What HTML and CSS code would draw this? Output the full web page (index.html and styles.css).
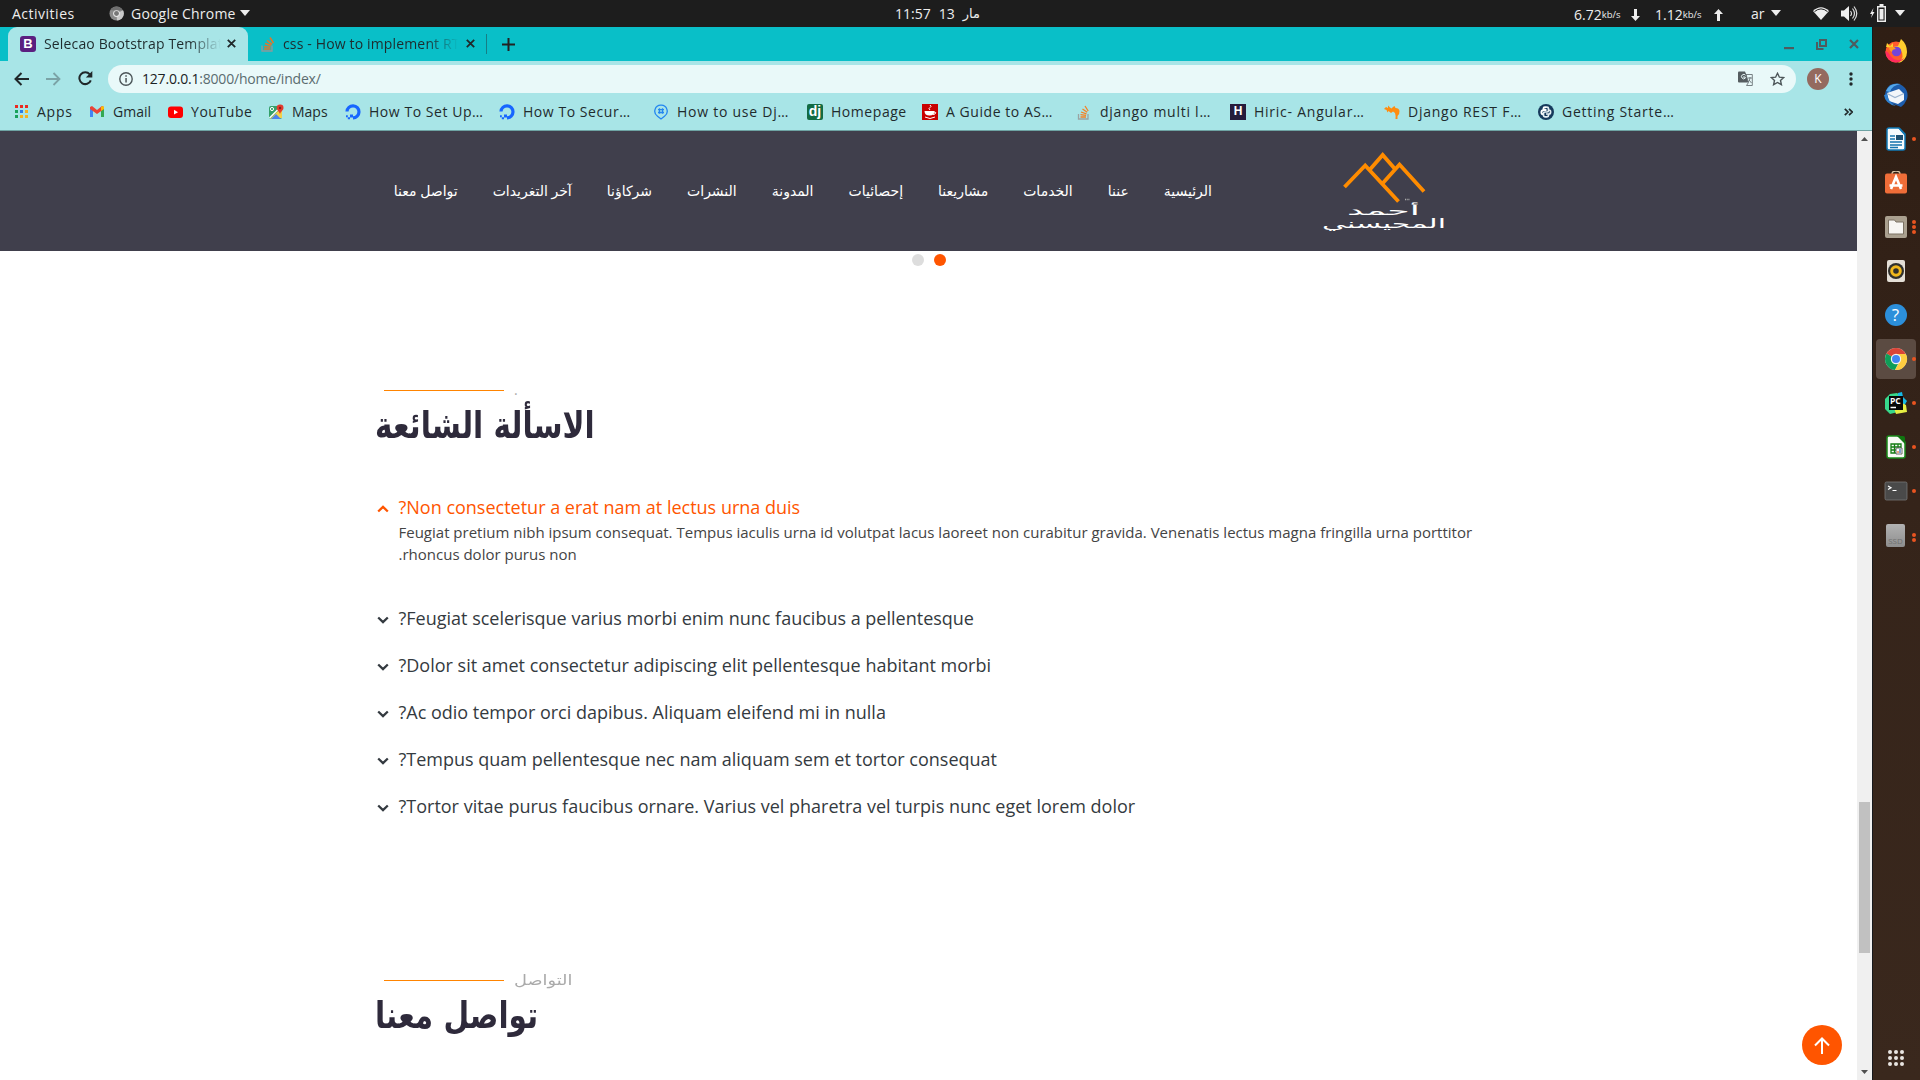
FILE: index.html
```
<!DOCTYPE html>
<html lang="ar">
<head>
<meta charset="utf-8">
<title>Selecao Bootstrap Template</title>
<link rel="stylesheet" href="styles.css">
</head>
<body>
<div class="desktop">
  <header class="topbar">
    <div class="top-left">
      <span class="activities">Activities</span>
      <svg class="app-icon" width="15" height="15" viewBox="0 0 16 16"><circle cx="8" cy="8" r="7.5" fill="#8b8b8b"/><path d="M8 8 15 4.5A7.500 7.500 0 0 1 8.500 15.500Z" fill="#c9c9c9"/><path d="M1.500 4.300A7.500 7.500 0 0 1 14.500 4.300L8 5Z" fill="#6f6f6f"/><circle cx="8" cy="8" r="3.600" fill="#e8e8e8"/><circle cx="8" cy="8" r="2.600" fill="#777"/></svg>
      <span class="app-name">Google Chrome</span>
      <i class="caret"></i>
    </div>
    <div class="clock"><span>11:57</span><span>13</span><span class="month">مار</span></div>
    <div class="top-right">
      <span class="rate r1">6.72<small>kb/s</small></span>
      <svg class="net n1" width="9" height="12" viewBox="0 0 9 12"><path d="M3 0h3v7h3l-4.500 5L0 7h3z" fill="#eee"/></svg>
      <span class="rate r2">1.12<small>kb/s</small></span>
      <svg class="net n2" width="9" height="12" viewBox="0 0 9 12"><path d="M3 12h3V5h3L4.500 0 0 5h3z" fill="#eee"/></svg>
      <span class="lang">ar</span><i class="caret"></i>
      <svg class="wifi" width="16" height="13" viewBox="0 0 16 13"><path d="M0 4Q8-3.500 16 4L8 13z" fill="#eee"/><path d="M1.500 4.600Q8-.8 14.500 4.600" fill="none" stroke="#1d1d1d" stroke-width="1"/></svg>
      <svg class="vol" width="17" height="15" viewBox="0 0 17 15"><path d="M0 4.500h3L8 0v15l-5-4.500H0z" fill="#eee"/><path d="M9.500 5q2 2.500 0 5M11.500 2.500q4 5 0 10M13 .5q5.500 7 0 14" fill="none" stroke="#ddd" stroke-width="1.200"/></svg>
      <svg class="bat" width="16" height="18" viewBox="0 0 16 18"><path d="M3.500 4 0 10h2L1 14l3.500-6H2.500z" fill="#eee"/><path d="M7.700 2.700h7.600v14.600H7.700z" fill="none" stroke="#eee" stroke-width="1.400"/><path d="M9.500 0h4v2.500h-4zM9.500 5h4v10.500h-4z" fill="#eee"/></svg>
      <i class="caret last"></i>
    </div>
  </header>

  <div class="window">
    <div class="tabstrip">
      <div class="tab active">
        <span class="boot">B</span>
        <span class="tab-title">Selecao Bootstrap Template</span>
        <svg class="x" width="9" height="9" viewBox="0 0 9 9"><path d="M.8.8l7.400 7.400M8.200.8.8 8.200"/></svg>
      </div>
      <div class="tab second">
        <svg width="14" height="16" viewBox="0 0 14 16"><path d="M1 9.500V15h10V9.500" fill="none" stroke="#8b9a9c" stroke-width="1.400"/><path d="M3 13h6.500M3 10.500l6.500.7M4 7.500l6 2M6 4.300l5 4M9 1.500l3.500 5.500" stroke="#e0762c" stroke-width="1.500"/></svg>
        <span class="tab-title">css - How to implement RTL</span>
        <svg class="x" width="9" height="9" viewBox="0 0 9 9"><path d="M.8.8l7.400 7.400M8.200.8.8 8.200"/></svg>
      </div>
      <i class="tab-sep"></i>
      <svg class="plus" width="13" height="13" viewBox="0 0 13 13"><path d="M6.500 0v13M0 6.500h13" stroke="#222" stroke-width="2"/></svg>
      <div class="win-buttons">
        <svg width="10" height="12" viewBox="0 0 10 12"><path d="M0 9h10v2.200H0z" fill="#4f5b5e"/></svg>
        <svg width="11" height="11" viewBox="0 0 11 11"><path d="M4 1h6v6H4zM1 3v7h6.500" fill="none" stroke="#4f5b5e" stroke-width="2"/></svg>
        <svg width="10" height="10" viewBox="0 0 10 10"><path d="M1 1l8 8M9 1 1 9" stroke="#4f5b5e" stroke-width="2.200"/></svg>
      </div>
    </div>
    <div class="toolbar">
      <svg class="tb back" width="15" height="14" viewBox="0 0 15 14"><path d="M15 7H1.500M7.500 1l-6 6 6 6" fill="none" stroke="#20282a" stroke-width="2"/></svg>
      <svg class="tb fwd" width="15" height="14" viewBox="0 0 15 14"><path d="M0 7h13.500M7.500 1l6 6-6 6" fill="none" stroke="#7ba3a6" stroke-width="1.800"/></svg>
      <svg class="tb reload" width="15" height="15" viewBox="0 0 15 15"><path d="M12.800 9.300A5.900 5.900 0 1 1 11.800 3.400" fill="none" stroke="#20282a" stroke-width="2"/><path d="M14.300 0v6.500H7.800z" fill="#20282a"/></svg>
      <div class="omnibox">
        <svg width="14" height="14" viewBox="0 0 14 14"><circle cx="7" cy="7" r="6.200" fill="none" stroke="#4d5659" stroke-width="1.400"/><path d="M6.300 6h1.500v4.500H6.300zM6.300 3.300h1.500v1.500H6.300z" fill="#4d5659"/></svg>
        <span class="url"><b>127.0.0.1</b>:8000/home/index/</span>
        <svg class="translate" width="15" height="15" viewBox="0 0 15 15"><path d="M0 1.500Q0 .5 1 .5h6l1.200 2.700 2.200 8.300H1q-1 0-1-1z" fill="#555d60"/><path d="M7.500 4.300A2.200 2.200 0 1 0 7.200 7.200V6H5" fill="none" stroke="#e9f9f9" stroke-width="1"/><path d="M8 3.500h6.300v11H8.500l2-3zM10 7h4M12 6v1q-.3 3-2 4M11 9l2.500 3" fill="none" stroke="#6a7376" stroke-width=".9"/></svg>
        <svg class="star" width="15" height="14" viewBox="0 0 15 14"><path d="M7.500 1.300l1.900 3.900 4.300.4-3.200 2.900.9 4.200-3.900-2.200-3.900 2.200.9-4.200L1.300 5.600l4.300-.4z" fill="none" stroke="#4d5659" stroke-width="1.400"/></svg>
      </div>
      <span class="avatar">K</span>
      <svg class="dots" width="4" height="14" viewBox="0 0 4 14"><circle cx="2" cy="2" r="1.700"/><circle cx="2" cy="7" r="1.700"/><circle cx="2" cy="12" r="1.700"/></svg>
    </div>
    <nav class="bookmarks">
      <div class="bm w76"><svg viewBox="0 0 16 16"><path d="M2 1h3v3H2zM7 1h3v3H7zM12 1h3v3h-3z" fill="#ea2a20"/><path d="M2 6h3v3H2zM2 11h3v3H2z" fill="#18a25c"/><path d="M7 6h3v3H7z" fill="#2c7be5"/><path d="M12 6h3v3h-3zM7 11h3v3H7zM12 11h3v3h-3z" fill="#f5b120"/></svg><span class="widest">Apps</span></div>
      <div class="bm w78"><svg viewBox="0 0 16 16"><path d="M1 4v9h3V6z" fill="#4285f4"/><path d="M12 6v7h3V4z" fill="#34a853"/><path d="M1 3l2-1 5 4 5-4 2 1v2L8 10 1 5z" fill="#ea4335"/><path d="M12 3l2-1q1.500.5 1 3l-3 2z" fill="#fbbc04"/></svg><span>Gmail</span></div>
      <div class="bm w101"><svg viewBox="0 0 16 16"><rect x="1" y="2.500" width="15" height="11.500" rx="3" fill="#f00"/><path d="M7 5.800v4.800l4-2.400z" fill="#fff"/></svg><span class="wider">YouTube</span></div>
      <div class="bm w77"><svg viewBox="0 0 16 16"><rect x="1" y="2" width="13" height="13" rx="2" fill="#34a06a"/><path d="M2 15 13 4l1 1v9z" fill="#f3d04b"/><path d="M3 15l5-5 5 5z" fill="#4a83ec"/><path d="M1.500 14 12 3.500" stroke="#fff" stroke-width="1.500"/><path d="M12 .5a3.300 3.300 0 0 0-3.300 3.300C8.700 6.500 11 7 12 10c1-3 3.500-3.500 3.500-6.200A3.300 3.300 0 0 0 12 .5z" fill="#e33b2e"/><circle cx="12" cy="4" r="1.200" fill="#851e18"/><circle cx="4" cy="5" r="1.600" fill="none" stroke="#fff"/></svg><span>Maps</span></div>
      <div class="bm w154"><svg viewBox="0 0 16 16"><path d="M2 7.500a6 6 0 1 1 6 6.300" fill="none" stroke="#1766ff" stroke-width="3.200"/><path d="M5 10.500h3v3H5zM2.800 13.300H5v2H2.800zM1 11.300h1.800v2H1z" fill="#1766ff"/></svg><span class="wider">How To Set Up…</span></div>
      <div class="bm w154"><svg viewBox="0 0 16 16"><path d="M2 7.500a6 6 0 1 1 6 6.300" fill="none" stroke="#1766ff" stroke-width="3.200"/><path d="M5 10.500h3v3H5zM2.800 13.300H5v2H2.800zM1 11.300h1.800v2H1z" fill="#1766ff"/></svg><span class="wider">How To Secur…</span></div>
      <div class="bm w154"><svg viewBox="0 0 16 16"><path d="M8 1.200a6 6 0 0 1 3.500 11L8 15l-3.500-2.800A6 6 0 0 1 8 1.200z" fill="none" stroke="#2386f0" stroke-width="1.300"/><path d="M6.500 4.300v5.500M9.500 4.300v5.500M5 5.700h6M5 8.500h6" stroke="#2386f0" stroke-width="1.300"/></svg><span class="widest">How to use Dj…</span></div>
      <div class="bm w115"><span class="fav dj">dj</span><span class="wider">Homepage</span></div>
      <div class="bm w154"><svg viewBox="0 0 16 16"><path d="M0 0h16v16H0z" fill="#c90000"/><path d="M2.500 7h10q0 4.500-5 4.500T2.500 7z" fill="#fff"/><path d="M12 8q3 0 1 2l-2 .5M3 13q5 3 10 0M8 1q2 1.500 0 2.500T8 6" fill="none" stroke="#fff"/></svg><span class="wider">A Guide to AS…</span></div>
      <div class="bm w154"><svg viewBox="0 0 16 16"><path d="M2.500 10v5h9.500v-5" fill="none" stroke="#9aa3a3" stroke-width="1.300"/><path d="M4.500 13h5.500M4.500 10.700l5.600.6M5 8l5.500 1.800M6.500 5l4.700 3.300M9 2l3.200 5" stroke="#f48024" stroke-width="1.300"/></svg><span class="widest">django multi l…</span></div>
      <div class="bm w154"><span class="fav hi">H</span><span class="widest">Hiric- Angular…</span></div>
      <div class="bm w154"><svg viewBox="0 0 16 16"><path d="M0 5 2 3l2 1V1.500l2 2 1.500 1L9 3l1.500-1 1 2q3.500 0 4 3 .3 3-2 5v3h-2q.5-3-.5-6L9 7.500 7 9 4.500 7 3.500 8.500 2.500 6z" fill="#ff8c0f"/></svg><span class="widest">Django REST F…</span></div>
      <div class="bm grow"><svg viewBox="0 0 16 16"><circle cx="8" cy="8" r="8" fill="#163a5c"/><path d="M8 3.200H6.800Q5.500 3.200 5.500 4.500V6H8.500M5.500 6.200Q3.400 6.200 3.400 8.200T5 10.200" fill="none" stroke="#fff" stroke-width="1.900"/><path d="M8 3.200h1q1.500 0 1.500 1.300V6.500Q10.500 8 9 8H7Q5.500 8 5.500 9.500v2Q5.500 12.800 7 12.800h2q1.500 0 1.500-1.300V10M11 6q1.600 0 1.600 2T11 10H8" fill="none" stroke="#e4edf2" stroke-width="1.700"/></svg><span class="widest">Getting Starte…</span></div>
      <svg class="more" width="9" height="8" viewBox="0 0 9 8"><path d="M.8.8 4 4 .8 7.200M5 .8 8.200 4 5 7.200" fill="none" stroke="#20282a" stroke-width="1.700"/></svg>
    </nav>

    <div class="viewport">
      <div class="page">
        <header class="site-header">
          <svg class="logo" width="130" height="84" viewBox="0 0 130 84">
            <g fill="none" stroke="#ff8c00" stroke-width="3.800"><path d="M24.500 38 45.200 16.500 78.500 52.500"/><path d="M49.500 21 62.700 6 75 20"/><path d="M62.500 34.500 79.500 15.500 104 42.500"/></g>
            <g fill="#fff" font-family="DejaVu Sans" direction="rtl" text-anchor="end"><text x="27" y="66" font-size="13" textLength="73" lengthAdjust="spacingAndGlyphs">أحمد</text><text x="2" y="78.500" font-size="13" textLength="124" lengthAdjust="spacingAndGlyphs">المحيسني</text></g>
            <path d="M85 50.500h5" stroke="#aaa" stroke-width="1.500" stroke-dasharray="1 .7"/>
          </svg>
          <nav class="menu">
            <a>الرئيسية</a><a>عننا</a><a>الخدمات</a><a>مشاريعنا</a><a>إحصائيات</a><a>المدونة</a><a>النشرات</a><a>شركاؤنا</a><a>آخر التغريدات</a><a>تواصل معنا</a>
          </nav>
        </header>
        <div class="carousel-dots"><i></i><i class="on"></i></div>
        <section class="block faq">
          <div class="eyebrow"><i></i><span>.</span></div>
          <h2>الاسألة الشائعة</h2>
          <ul>
            <li class="open"><svg width="12" height="8" viewBox="0 0 12 8"><path d="M1.200 6.500l4.800-4.600 4.800 4.600"/></svg><div><h3>Non consectetur a erat nam at lectus urna duis?</h3><p>Feugiat pretium nibh ipsum consequat. Tempus iaculis urna id volutpat lacus laoreet non curabitur gravida. Venenatis lectus magna fringilla urna porttitor rhoncus dolor purus non.</p></div></li>
            <li><svg width="12" height="8" viewBox="0 0 12 8"><path d="M1.200 1.500l4.800 4.600 4.800-4.600"/></svg><h3>Feugiat scelerisque varius morbi enim nunc faucibus a pellentesque?</h3></li>
            <li><svg width="12" height="8" viewBox="0 0 12 8"><path d="M1.200 1.500l4.800 4.600 4.800-4.600"/></svg><h3>Dolor sit amet consectetur adipiscing elit pellentesque habitant morbi?</h3></li>
            <li><svg width="12" height="8" viewBox="0 0 12 8"><path d="M1.200 1.500l4.800 4.600 4.800-4.600"/></svg><h3>Ac odio tempor orci dapibus. Aliquam eleifend mi in nulla?</h3></li>
            <li><svg width="12" height="8" viewBox="0 0 12 8"><path d="M1.200 1.500l4.800 4.600 4.800-4.600"/></svg><h3>Tempus quam pellentesque nec nam aliquam sem et tortor consequat?</h3></li>
            <li><svg width="12" height="8" viewBox="0 0 12 8"><path d="M1.200 1.500l4.800 4.600 4.800-4.600"/></svg><h3>Tortor vitae purus faucibus ornare. Varius vel pharetra vel turpis nunc eget lorem dolor?</h3></li>
          </ul>
        </section>
        <section class="block contact">
          <div class="eyebrow"><i></i><span class="spread">التواصل</span></div>
          <h2>تواصل معنا</h2>
        </section>
        <span class="to-top"><svg width="16" height="17" viewBox="0 0 16 17"><path d="M8 17V2M1 8.500l7-7 7 7" fill="none" stroke="#fff" stroke-width="2"/></svg></span>
      </div>
      <div class="scrollbar">
        <svg width="7" height="4" viewBox="0 0 7 4"><path d="M0 4 3.500 0 7 4z" fill="#505050"/></svg>
        <i class="thumb"></i>
        <svg width="7" height="4" viewBox="0 0 7 4"><path d="M0 0l3.500 4L7 0z" fill="#505050"/></svg>
      </div>
    </div>
  </div>

  <aside class="dock">
    <div class="app"><svg viewBox="0 0 24 24"><circle cx="12" cy="13" r="10.500" fill="#ff5a2c"/><path d="M2 8 3 4l3 3 3-3v4l5-1 3-7q6 5 6 13a11 11 0 0 1-9 11q8-6 2-14z" fill="#ffce2e"/><path d="M1.500 12a10.500 10.500 0 0 0 19 7q-8 5-13-1-4-6-6-6z" fill="#ff2b5e"/><circle cx="12.500" cy="12.500" r="4.800" fill="#7345d8"/><path d="M5 8q5-1 7 2-4 0-4 3-3-1-3-5z" fill="#ff9a1f"/></svg></div>
    <div class="app"><svg viewBox="0 0 24 24"><path d="M6 2Q14-2 20 4q5 5 3 12-2 5-6 8l-5-2Q3 20 1 13q0-7 5-11z" fill="#1d5dad"/><path d="M2 8Q6-1 17 1q-9 1-11 8z" fill="#54a8ea"/><path d="M3 10l12-4 5 5v6l-6 4-9-3z" fill="#f3f6fa"/><path d="M3 10.500l8 4 9-4" fill="none" stroke="#9db5d0" stroke-width="1.200"/><path d="M0 12q1 9 12 11-8-4-9-12z" fill="#2f80cf"/></svg></div>
    <div class="app"><svg viewBox="0 0 24 24"><path d="M5 1h10l6 6v14q0 2-2 2H5q-2 0-2-2V3q0-2 2-2z" fill="#f7fbfd" stroke="#1179b5" stroke-width="1.500"/><path d="M14 1h2l5 6v2z" fill="#1179b5"/><path d="M6 9h5M6 12h5M6 15h12M6 18h12M6 20.500h8" stroke="#1474ad" stroke-width="1.400"/><path d="M12 8h7v5h-7z" fill="#1d4f70"/></svg><b></b></div>
    <div class="app"><svg viewBox="0 0 24 24"><path d="M8 3q0-3 4-3t4 3" fill="none" stroke="#d8c3a4" stroke-width="1.400"/><rect x="1" y="2.500" width="22" height="20" rx="2" fill="#ef6d38"/><path d="M7 18l5-12 5 12M5.500 14.500h13" fill="none" stroke="#fff" stroke-width="2.600"/></svg></div>
    <div class="app"><svg viewBox="0 0 24 24"><rect x="1" y="1" width="22" height="22" rx="2" fill="#aaa08f"/><path d="M4.500 5h6l1.500 2h7.500v12h-15z" fill="#f7f5f2" stroke="#7d7364"/></svg><b></b><b></b><b></b></div>
    <div class="app"><svg viewBox="0 0 24 24"><rect x="3" y="1" width="18" height="22" rx="2" fill="#e4dfd7"/><circle cx="12" cy="12" r="8" fill="#30302d"/><circle cx="12" cy="12" r="4.300" fill="none" stroke="#f0b71c" stroke-width="3"/><circle cx="12" cy="12" r="1.700" fill="#30302d"/></svg></div>
    <div class="app"><span class="help">?</span></div>
    <div class="app current"><svg viewBox="0 0 24 24"><circle cx="12" cy="12" r="11" fill="#e0e0e0"/><path d="M12 12 2.500 6.500a11 11 0 0 1 19 0z" fill="#db4437"/><path d="M12 12 2.500 6.500A11 11 0 0 0 11 23l4-8z" fill="#0f9d58"/><path d="M13 7h8.800A11 11 0 0 1 11 23l5-9z" fill="#ffcd40"/><circle cx="12" cy="12" r="5.200" fill="#f1f1f1"/><circle cx="12" cy="12" r="4" fill="#4285f4"/></svg><b></b></div>
    <div class="app"><svg viewBox="0 0 24 24"><path d="M1 8l5-5 7-1 4 3-3 16-8 2-5-5z" fill="#37d88b"/><path d="M14 2l4-1 1 5 4 4-3 5h-6z" fill="#16b9e5"/><path d="M18 12l4 2 1 7-11 2-2-6z" fill="#e7ef43"/><path d="M5 5h14v14H5z" fill="#080808"/><path d="M6.500 16.500h5.500" stroke="#fff" stroke-width="1.500"/><text x="6" y="13" font-family="Open Sans" font-size="8.500" font-weight="700" fill="#fff">PC</text></svg><b></b></div>
    <div class="app"><svg viewBox="0 0 24 24"><path d="M5 1h10l6 6v14q0 2-2 2H5q-2 0-2-2V3q0-2 2-2z" fill="#f8fbf6" stroke="#1a8a1a" stroke-width="1.500"/><path d="M13 1h6q2 0 2 2v6z" fill="#107510"/><path d="M7 9h10v9H7zM7 12h10M7 15h10M10.500 9v9M14 9v9" fill="none" stroke="#137c13" stroke-width="1.300"/><path d="M12 13h6v6h-6z" fill="#fff" stroke="#666"/><path d="M14 18v-2" stroke="#e66b24" stroke-width="1.200"/><path d="M16 18v-4" stroke="#2664b0" stroke-width="1.200"/></svg><b></b></div>
    <div class="app"><svg viewBox="0 0 24 24"><rect x="1" y="3" width="22" height="18" rx="1.500" fill="#4a4a4a" stroke="#777" stroke-width=".8"/><path d="M4 7l3 1.700L4 10.500M8.500 11.500h4" fill="none" stroke="#fff" stroke-width="1.200"/></svg><b></b></div>
    <div class="app"><span class="ssd">SSD</span><b></b><b></b></div>
    <svg class="grid" width="16" height="16" viewBox="0 0 16 16"><g fill="#e9e5e2"><circle cx="2" cy="2" r="2"/><circle cx="8" cy="2" r="2"/><circle cx="14" cy="2" r="2"/><circle cx="2" cy="8" r="2"/><circle cx="8" cy="8" r="2"/><circle cx="14" cy="8" r="2"/><circle cx="2" cy="14" r="2"/><circle cx="8" cy="14" r="2"/><circle cx="14" cy="14" r="2"/></g></svg>
  </aside>
</div>
</body>
</html>
```
FILE: styles.css
```
* { box-sizing: border-box; }
body { margin: 0; overflow: hidden; font-family: "Open Sans", "DejaVu Sans", sans-serif; }
svg { display: block; flex: none; }
h2, h3, p, ul { margin: 0; padding: 0; }

.desktop { width: 1920px; height: 1080px; display: grid; grid-template: 27px 1053px / 1872px 48px; }

/* system bar */
.topbar { grid-column: 1 / 3; display: grid; grid-template-columns: 895px 1fr 346px; background: #1d1d1d; color: #ededed; font-size: 14px; line-height: 25px; white-space: nowrap; }
.top-left, .top-right, .clock { display: flex; align-items: center; height: 26px; }
.top-left { padding-left: 12px; }
.activities { width: 97px; letter-spacing: .5px; }
.app-icon { margin-right: 7px; }
.app-name { width: 109px; letter-spacing: .2px; }
.caret { border: 5px solid transparent; border-top: 6px solid #eee; border-bottom: 0; }
.clock { direction: ltr; gap: 8px; }
.month { direction: rtl; font-size: 13px; }
.rate { width: 57px; padding-top: 3px; display: flex; }
.rate small { font-size: 9.500px; }
.n1 { margin-right: 15px; }
.n2 { margin: 0 28px 0 2px; }
.n2, .n1 { margin-top: 3px; }
.lang { width: 20px; }
.wifi { margin: 0 12px 0 32px; }
.vol { margin-right: 12px; }
.bat { margin-right: 10px; }
.last { margin-left: -1px; }

/* browser */
.window { display: grid; grid-template-rows: 34px 36px 34px 949px; color: #1f2b2d; font-size: 14px; white-space: nowrap; }
.tabstrip { display: flex; align-items: center; background: #09bfc8; padding-left: 8px; }
.tab { display: flex; align-items: center; height: 34px; padding-bottom: 1px; }
.tab.active { width: 240px; padding-left: 12px; background: #a8e5e7; border-radius: 9px 9px 0 0; }
.tab.second { padding-left: 13px; width: 238px; }
.boot { width: 16px; height: 16px; border-radius: 3px; background: #5b1f80; color: #fff; font: bold 13px/16px "Liberation Sans", sans-serif; text-align: center; }
.tab-title { margin-left: 8px; width: 177px; overflow: hidden; letter-spacing: .15px; -webkit-mask-image: linear-gradient(90deg, #000 82%, transparent); }
.second .tab-title { width: 175px; }
.x { margin-left: 6px; fill: none; stroke: #20282a; stroke-width: 1.8; }
.second .x { margin-left: 8px; }
.tab-sep { width: 1px; height: 20px; background: #167e85; }
.plus { margin-left: 15px; }
.win-buttons { margin-left: auto; padding-right: 13px; display: flex; gap: 22px; align-items: center; }
.toolbar { display: flex; align-items: center; background: #a8e5e7; padding: 0 0 1px 14px; }
.fwd { margin-left: 17px; }
.reload { margin: 0 16px 0 17px; }
.omnibox { width: 1688px; height: 28px; border-radius: 14px; background: #e9f9f9; display: flex; align-items: center; padding: 0 11px; margin-left: -1px; }
.url { flex: 1; margin-left: 9px; color: #5b6c70; letter-spacing: -.2px; }
.url b { font-weight: 400; color: #1b2224; }
.star { margin: 0 0 0 17px; }
.avatar { width: 22px; height: 22px; border-radius: 50%; margin: 0 20px 0 11px; background: #946a5f; color: #fff; font-size: 12px; line-height: 22px; text-align: center; }
.dots { fill: #20282a; }
.bookmarks { display: flex; align-items: center; background: #a8e5e7; border-bottom: 1px solid #6ea3a3; padding: 0 19px 4px 13px; }
.bm { display: flex; align-items: center; gap: 8px; flex: none; }
.bm svg { width: 16px; height: 16px; }
.wider { letter-spacing: .55px; }
.widest { letter-spacing: .75px; }
.w76 { width: 76px; } .w77 { width: 77px; } .w78 { width: 78px; } .w101 { width: 101px; } .w115 { width: 115px; } .w154 { width: 154px; }
.grow { flex: 1; }
.fav { width: 16px; height: 16px; color: #fff; font: bold 12px/15px "Liberation Sans", sans-serif; text-align: center; }
.dj { background: #126b43; border-radius: 2px; font-size: 14px; }
.hi { background: #261c3c; }

/* web page */
.viewport { display: grid; grid-template-columns: 1857px 15px; }
.page { position: relative; background: #fff; overflow: hidden; white-space: normal; color: #444; }
.site-header { height: 120px; background: #403f4c; direction: rtl; display: flex; align-items: center; padding-right: 407px; }
.menu { display: flex; gap: 35px; margin-right: 108px; color: #fff; font-size: 14px; line-height: 20px; white-space: nowrap; }
.carousel-dots { display: flex; justify-content: center; gap: 10px; padding-top: 3px; height: 129px; }
.carousel-dots i { width: 12px; height: 12px; border-radius: 50%; background: #ddd; }
.carousel-dots .on { background: #ff5500; }
.block { margin-left: 375px; width: 1108px; }
.eyebrow { display: flex; align-items: center; height: 20px; padding-left: 9px; color: #aaa; font-size: 14px; line-height: 20px; }
.eyebrow i { width: 120px; height: 1px; background: #ff8400; margin-right: 10px; }
.spread { transform: scaleX(1.27); transform-origin: left; }
h2 { width: max-content; padding-top: 1px; color: #2e2a3b; font-family: "DejaVu Sans Condensed", "DejaVu Sans", sans-serif; font-stretch: condensed; font-size: 37px; line-height: 49px; font-weight: 700; direction: rtl; transform: scaleX(.888); transform-origin: left; }
.faq { height: 590px; }
.faq ul { list-style: none; padding-top: 46px; }
.faq li { display: flex; gap: 10px; padding-left: 1.5px; height: 47px; color: #343a40; }
.faq li svg { margin-top: 8.5px; fill: none; stroke: currentColor; stroke-width: 2.3; }
.faq li.open { height: 111px; color: #ff5500; }
h3 { font-size: 18px; line-height: 22px; font-weight: 400; direction: rtl; text-align: left; white-space: nowrap; }
.faq p { width: 1080px; margin-top: 3px; color: #444; font-size: 15px; line-height: 22px; direction: rtl; text-align: left; }
.to-top { position: absolute; left: 1802px; top: 894px; width: 40px; height: 40px; border-radius: 50%; background: #ff5500; display: grid; place-items: center; }
.scrollbar { background: #f0f0f0; display: flex; flex-direction: column; align-items: center; justify-content: space-between; padding: 6px 0; }
.thumb { width: 11px; height: 151px; background: #c1c1c1; margin: 661px 0 117px; }

/* launcher */
.dock { background: linear-gradient(#2f1e14, #35241a 45%, #3a281d); box-shadow: inset 1px 0 #17191d; display: flex; flex-direction: column; align-items: center; padding: 4px 1px 0 0; }
.app { position: relative; flex: none; width: 40px; height: 40px; margin-bottom: 4px; display: flex; align-items: center; justify-content: center; border-radius: 4px; }
.app svg { width: 24px; height: 24px; }
.current { background: #5b4b42; }
.app b { position: absolute; right: 0; top: 18px; width: 4px; height: 4px; border-radius: 50%; background: #e95420; }
.app b:nth-of-type(2) { top: 23px; }
.app b:nth-of-type(3) { top: 13px; }
.help { width: 22px; height: 22px; border-radius: 50%; background: #2c8fdb; color: #fff; font-size: 17px; line-height: 22px; text-align: center; }
.ssd { width: 19px; height: 23px; border-radius: 2px; background: linear-gradient(#b2b2b2, #8e8e8e); color: #707070; font-size: 8px; line-height: 33px; text-align: center; }
.grid { margin: auto 0 14px; }
```
